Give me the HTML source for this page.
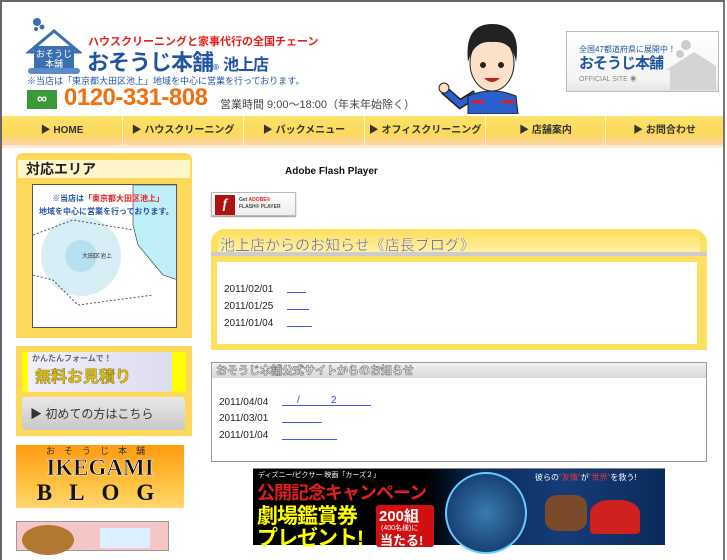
<!DOCTYPE html>
<html><head><meta charset="utf-8"><style>
*{margin:0;padding:0;box-sizing:border-box}
body{width:727px;height:545px;overflow:hidden;background:#fff;font-family:"Liberation Sans","Noto Sans CJK JP",sans-serif;position:relative}
.a{position:absolute}
.frame{left:0;top:0;width:725px;height:560px;border-left:2px solid #666;border-top:2px solid #666;border-right:2px solid #777}
.nav{left:2px;top:116px;width:721px;height:29px;background:linear-gradient(#fde36a,#fbd95a 60%,#fbd5a8)}
.nav div{position:absolute;top:0;height:29px;font-size:10px;font-weight:bold;color:#333;line-height:29px;text-align:center;border-right:1px solid #fff6d0;white-space:nowrap}
.date{font-size:10px;color:#222}
.lnk{border-bottom:1px solid #4455ee;height:1px}
</style></head><body>
<div class="a frame"></div>
<svg class="a" style="left:26px;top:16px" width="56" height="60" viewBox="0 0 56 60">
<circle cx="11" cy="6" r="4" fill="#3a6fb0"/><circle cx="16" cy="11" r="2.5" fill="#3a6fb0"/><circle cx="10" cy="13" r="2" fill="#3a6fb0"/>
<polygon points="3,36 28,15 53,36" fill="#fff" stroke="#3a6fb0" stroke-width="3"/>
<rect x="8" y="30" width="40" height="24" fill="#3a6fb0"/>
<rect x="2" y="52" width="52" height="6" rx="3" fill="#5d8bc7"/>
<text x="28" y="41" font-size="9" fill="#fff" text-anchor="middle" font-family="Noto Sans CJK JP">おそうじ</text>
<text x="28" y="51" font-size="9" fill="#fff" text-anchor="middle" font-family="Noto Sans CJK JP">本舗</text>
</svg>
<div class="a" style="left:88px;top:33px;font-size:11px;color:#e0201a;font-weight:bold">ハウスクリーニングと家事代行の全国チェーン</div>
<div class="a" style="left:87px;top:45px;font-size:22px;color:#2255a0;font-weight:bold;letter-spacing:-1px">おそうじ本舗<span style="font-size:8px">®</span> <span style="font-size:16px">池上店</span></div>
<div class="a" style="left:27px;top:74px;font-size:9px;color:#2255a0">※当店は「東京都大田区池上」地域を中心に営業を行っております。</div>
<div class="a" style="left:27px;top:90px;width:30px;height:19px;background:#3a9a3a;color:#fff;font-size:14px;font-weight:bold;line-height:17px;text-align:center">∞</div>
<div class="a" style="left:64px;top:84px;font-size:24px;color:#f07010;font-weight:bold;letter-spacing:-0.5px">0120-331-808</div>
<div class="a" style="left:220px;top:96px;font-size:11px;color:#444">営業時間 9:00〜18:00（年末年始除く）</div>
<svg class="a" style="left:436px;top:18px" width="90" height="96" viewBox="0 0 90 96">
<path d="M40 76 L24 86 L8 72" stroke="#222" stroke-width="9" fill="none"/><path d="M40 76 L24 86 L8 72" stroke="#2a5fcc" stroke-width="6" fill="none"/>
<circle cx="8" cy="70" r="5" fill="#fce0c8" stroke="#222"/>
<path d="M32 78 Q56 68 80 78 L82 96 L32 96Z" fill="#2a5fcc" stroke="#222"/>
<rect x="36" y="82" width="12" height="3" fill="#e02020"/><rect x="66" y="82" width="12" height="3" fill="#e02020"/>
<ellipse cx="56" cy="45" rx="22" ry="28" fill="#fce0c8" stroke="#222"/>
<path d="M32 44 Q28 6 56 6 Q86 6 80 44 Q76 22 56 24 Q38 22 32 44Z" fill="#222"/>
<circle cx="47" cy="47" r="3" fill="#222"/><circle cx="65" cy="47" r="3" fill="#222"/>
<path d="M48 60 Q56 68 64 60Z" fill="#c02020"/>
</svg>
<div class="a" style="left:566px;top:31px;width:153px;height:61px;border:1px solid #bbb;background:linear-gradient(#fff,#f4f4f4 80%,#e4e4e4)">
<div style="position:absolute;left:12px;top:12px;font-size:8px;color:#2255a0">全国47都道府県に展開中！</div>
<div style="position:absolute;left:12px;top:20px;font-size:15px;color:#2255a0;font-weight:bold;letter-spacing:-1px">おそうじ本舗</div>
<div style="position:absolute;left:12px;top:42px;font-size:7px;color:#888">OFFICIAL SITE ◉</div>
<svg style="position:absolute;right:2px;top:8px" width="50" height="50"><circle cx="20" cy="5" r="5" fill="#ccc"/><circle cx="14" cy="14" r="4" fill="#ccc"/><polygon points="0,30 28,12 50,26 50,50 4,50 4,30" fill="#d4d4d4"/></svg>
</div>
<div class="a nav">
<div style="left:0;width:121px">▶ HOME</div>
<div style="left:121px;width:121px">▶ ハウスクリーニング</div>
<div style="left:242px;width:121px">▶ パックメニュー</div>
<div style="left:363px;width:121px">▶ オフィスクリーニング</div>
<div style="left:484px;width:120px">▶ 店舗案内</div>
<div style="left:604px;width:117px;border:0">▶ お問合わせ</div>
</div>
<div class="a" style="left:2px;top:145px;width:721px;height:3px;background:#fde8d0"></div>
<div class="a" style="left:16px;top:153px;width:176px;height:185px;background:#fdd85a;border-radius:7px 7px 0 0"></div>
<div class="a" style="left:18px;top:160px;width:172px;height:18px;background:#fff6cc"></div>
<div class="a" style="left:26px;top:159px;font-size:14px;font-weight:bold;color:#222">対応エリア</div>
<div class="a" style="left:32px;top:184px;width:145px;height:144px;background:#fff;border:1px solid #555;overflow:hidden">
<svg width="145" height="144" style="position:absolute;left:0;top:0"><polygon points="100,0 145,0 145,95 130,90 115,72 105,60 100,40" fill="#bff0fa" stroke="#333" stroke-width=".6"/><circle cx="48" cy="71" r="40" fill="#d8eef6"/><circle cx="48" cy="71" r="16" fill="#b8dff0"/><path d="M0 50 L40 35 L100 45 M0 90 L20 95 L45 120 L120 110" stroke="#555" stroke-dasharray="2,2" fill="none"/></svg>
<div style="position:absolute;left:19px;top:8px;font-size:8px;color:#2255a0;font-weight:bold">※当店は<span style="color:#e02020">「東京都大田区池上」</span></div>
<div style="position:absolute;left:6px;top:21px;font-size:8px;color:#2255a0;font-weight:bold">地域を中心に営業を行っております。</div>
<div style="position:absolute;left:49px;top:66px;font-size:6px;color:#333">大田区池上</div>
</div>
<div class="a" style="left:16px;top:346px;width:176px;height:90px;background:#fdd85a"></div>
<div class="a" style="left:22px;top:352px;width:164px;height:40px;background:linear-gradient(90deg,#ff0 0,#ff0 6px,#eef 6px,#dde 150px,#ff0 150px)"></div>
<div class="a" style="left:32px;top:353px;font-size:8px;color:#666;font-weight:bold">かんたんフォームで！</div>
<div class="a" style="left:35px;top:363px;font-size:16px;color:#f0c000;font-weight:bold;-webkit-text-stroke:.6px #884">無料お見積り</div>
<div class="a" style="left:22px;top:397px;width:163px;height:33px;background:linear-gradient(#e8e8e8,#c8c8c8);border-radius:3px"></div>
<div class="a" style="left:30px;top:405px;font-size:12px;color:#333">▶ 初めての方はこちら</div>
<div class="a" style="left:16px;top:445px;width:168px;height:63px;background:linear-gradient(#ff9a10,#ffc040 60%,#ffd870)"></div>
<div class="a" style="left:16px;top:444px;width:168px;text-align:center;font-size:9px;letter-spacing:9px;color:#333">おそうじ本舗</div>
<div class="a" style="left:16px;top:455px;width:168px;text-align:center;font-size:23px;font-weight:bold;font-family:'Liberation Serif',serif;color:#111;-webkit-text-stroke:.5px #fff">IKEGAMI</div>
<div class="a" style="left:20px;top:480px;width:168px;text-align:center;font-size:23px;font-weight:bold;font-family:'Liberation Serif',serif;color:#111;letter-spacing:17px">BLOG</div>
<div class="a" style="left:16px;top:521px;width:153px;height:30px;background:#f4c6c6;border:1px solid #999"></div>
<div class="a" style="left:22px;top:525px;width:52px;height:30px;border-radius:50%;background:#b07830"></div>
<div class="a" style="left:100px;top:528px;width:50px;height:20px;background:#def"></div>
<div class="a" style="left:285px;top:166px;font-size:10px;font-weight:bold;color:#111">Adobe Flash Player</div>
<div class="a" style="left:211px;top:192px;width:85px;height:24px;border:1px solid #bbb;background:linear-gradient(#fff,#eee);box-shadow:0 1px 1px #999">
<div style="position:absolute;left:3px;top:2px;width:20px;height:20px;background:#b01010;color:#fff;font-style:italic;font-weight:bold;font-size:14px;text-align:center;line-height:20px;font-family:'Liberation Serif',serif">f</div>
<div style="position:absolute;left:27px;top:4px;font-size:5px;color:#444;line-height:7px;font-weight:bold">Get <span style="color:#e02020">ADOBE®</span><br>FLASH® PLAYER</div></div>
<div class="a" style="left:211px;top:229px;width:496px;height:121px;background:#fde060;border-radius:14px 14px 0 0"></div>
<div class="a" style="left:218px;top:232px;width:482px;height:20px;background:linear-gradient(#fde060,#fff0a8);border-radius:10px 10px 0 0"></div>
<div class="a" style="left:220px;top:234px;font-size:15px;color:#666;-webkit-text-stroke:.3px #fff">池上店からのお知らせ《店長ブログ》</div>
<div class="a" style="left:211px;top:252px;width:496px;height:4px;background:#ccc"></div>
<div class="a" style="left:217px;top:262px;width:480px;height:82px;background:#fff"></div>
<div class="a date" style="left:224px;top:284px">2011/02/01</div><div class="a lnk" style="left:287px;top:292px;width:19px"></div>
<div class="a date" style="left:224px;top:301px">2011/01/25</div><div class="a lnk" style="left:287px;top:309px;width:22px"></div>
<div class="a date" style="left:224px;top:318px">2011/01/04</div><div class="a lnk" style="left:287px;top:326px;width:25px"></div>
<div class="a" style="left:211px;top:362px;width:496px;height:100px;border:1px solid #999;background:#fff"></div>
<div class="a" style="left:212px;top:363px;width:494px;height:15px;background:linear-gradient(#f0f0f0,#d8d8d8)"></div>
<div class="a" style="left:216px;top:362px;font-size:11px;font-weight:bold;color:#fff;-webkit-text-stroke:.8px #888">おそうじ本舗公式サイトからのお知らせ</div>
<div class="a date" style="left:219px;top:397px">2011/04/04</div><div class="a lnk" style="left:282px;top:405px;width:89px"></div><div class="a" style="left:331px;top:395px;font-size:10px;color:#44e">2</div><div class="a" style="left:297px;top:395px;font-size:10px;color:#44e">/</div>
<div class="a date" style="left:219px;top:413px">2011/03/01</div><div class="a lnk" style="left:282px;top:422px;width:40px"></div>
<div class="a date" style="left:219px;top:430px">2011/01/04</div><div class="a lnk" style="left:282px;top:439px;width:55px"></div>
<div class="a" style="left:253px;top:468px;width:412px;height:1px;background:#888"></div>
<div class="a" style="left:253px;top:469px;width:412px;height:76px;background:linear-gradient(90deg,#000 0,#000 42%,#0a2a5a 55%,#163c78 75%,#0a2a5a)"></div>
<div class="a" style="left:445px;top:472px;width:82px;height:82px;border-radius:50%;border:2px solid #6cf;background:radial-gradient(#3a7ab0,#0a2a5a)"></div>
<div class="a" style="left:258px;top:470px;font-size:7px;color:#fff">ディズニー/ピクサー 映画「カーズ２」</div>
<div class="a" style="left:257px;top:479px;font-size:18px;font-weight:bold;color:#e02020;letter-spacing:-1px">公開記念キャンペーン</div>
<div class="a" style="left:257px;top:500px;font-size:21px;font-weight:bold;color:#ff0;letter-spacing:-1px">劇場鑑賞券</div>
<div class="a" style="left:257px;top:522px;font-size:21px;font-weight:bold;color:#ff0;letter-spacing:-1px">プレゼント!</div>
<div class="a" style="left:376px;top:505px;width:58px;height:42px;background:#d01010;border-radius:3px"></div>
<div class="a" style="left:379px;top:505px;font-size:15px;font-weight:bold;color:#fff">200組</div>
<div class="a" style="left:381px;top:523px;font-size:7px;color:#fff">(400名様)に</div>
<div class="a" style="left:380px;top:530px;font-size:13px;font-weight:bold;color:#fff">当たる!</div>
<div class="a" style="left:535px;top:472px;font-size:8px;color:#fff">彼らの<span style="color:#e33">"友情"</span>が<span style="color:#e33">"世界"</span>を救う!</div>
<div class="a" style="left:590px;top:500px;width:50px;height:34px;border-radius:40% 40% 10% 10%;background:#d02020"></div>
<div class="a" style="left:545px;top:495px;width:42px;height:36px;border-radius:30%;background:#7a4a2a"></div>
</body></html>
